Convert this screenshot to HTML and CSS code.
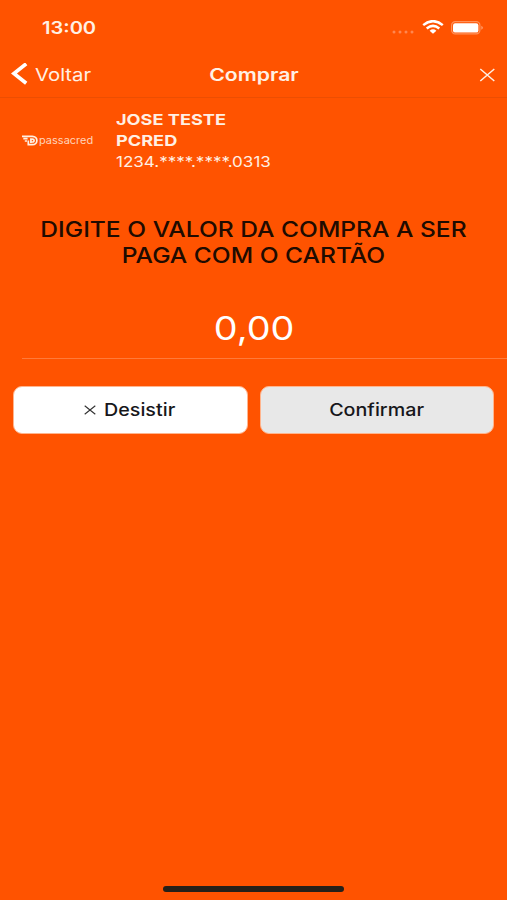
FILE: index.html
```html
<!DOCTYPE html>
<html lang="pt-BR">
<head>
<meta charset="utf-8">
<title>Comprar</title>
<link rel="stylesheet" href="styles.css">
</head>
<body>
<div class="screen">
  <div class="status">
    <span class="wide time">13:00</span>
    <div class="indicators">
      <svg class="signal" width="24" height="4" viewBox="0 0 24 4" fill="#ff8750"><circle cx="3" cy="2" r="1.5"/><circle cx="9" cy="2" r="1.5"/><circle cx="15" cy="2" r="1.5"/><circle cx="21" cy="2" r="1.5"/></svg>
      <svg width="22" height="14" viewBox="0 0 22 14" fill="none" stroke="#fff" stroke-width="2.5"><path d="M1.2 5.1Q11-2.8 20.8 5.1M4.7 8.4Q11 3.4 17.3 8.4"/><path d="M7.6 10.7Q11 8 14.4 10.7L11 13.7Z" fill="#fff" stroke="none"/></svg>
      <svg width="33" height="14" viewBox="0 0 33 14"><rect x=".6" y=".6" width="28.3" height="12.3" rx="3.6" fill="none" stroke="#ff925b" stroke-width="1.2"/><rect x="2" y="2.2" width="25.4" height="9.4" rx="2.2" fill="#fff"/><path d="M30.2 4.8Q34 6.8 30.2 8.8Z" fill="#ff925b"/></svg>
    </div>
  </div>
  <header class="nav">
    <div class="back">
      <svg width="17" height="24" viewBox="0 0 17 24" fill="none" stroke="#fff" stroke-width="3.7"><path d="M15.2 .8L2.9 10.5L15.2 20.2"/></svg>
      <span class="wide">Voltar</span>
    </div>
    <h1><span class="wide">Comprar</span></h1>
    <svg class="close" width="16" height="14" viewBox="0 0 16 14" fill="none" stroke="#fff0e4" stroke-width="1.5"><path d="M1.3 1L15.3 13M15.3 1L1.3 13"/></svg>
  </header>
  <section class="card">
    <div class="logo">
      <svg width="16" height="11" viewBox="0 0 16 11" fill="none" stroke="#fff0e4" stroke-width="1.7"><path d="M0 1.3H10.3C16.4 1.3 16.4 9.7 10.3 9.7H6.3V5.5M1.3 3.7H5.6M2.8 6H5"/><path d="M8.9 7.9V4.1H10.4C12.7 4.1 12.7 7 10.4 7H8.9"/></svg>
      <span class="wide">passacred</span>
    </div>
    <div class="holder">
      <strong class="wide">JOSE TESTE</strong>
      <strong class="wide">PCRED</strong>
      <span class="wide">1234.****.****.0313</span>
    </div>
  </section>
  <h2><span class="wide">DIGITE O VALOR DA COMPRA A SER<br>PAGA COM O CARTÃO</span></h2>
  <div class="amount"><span class="wide">0,00</span></div>
  <div class="actions">
    <button class="cancel"><svg width="12" height="10" viewBox="0 0 12 10" fill="none" stroke="#333" stroke-width="1.1"><path d="M.7.7L11.3 9.3M11.3.7L.7 9.3"/></svg><span class="wide">Desistir</span></button>
    <button class="confirm"><span class="wide">Confirmar</span></button>
  </div>
  <div class="home"></div>
</div>
</body>
</html>
```
FILE: styles.css
```css
* { box-sizing: border-box; }
body { margin: 0; background: #ff5300; font-family: Inter, "Liberation Sans", sans-serif; color: #fff0e4; }
.screen { width: 507px; height: 900px; display: flex; flex-direction: column; overflow: hidden; }
.wide { display: inline-block; white-space: nowrap; transform: scaleX(1.18); transform-origin: left center; }
.status { height: 52px; padding: 3px 23px 0 42px; display: flex; justify-content: space-between; align-items: center; }
.time { font-size: 17px; font-weight: 600; }
.indicators { display: flex; align-items: center; }
.indicators svg:nth-child(2) { margin: -1px 7px 0 7px; }
.signal { margin-top: 8px; }
.nav { height: 46px; border-bottom: 1px solid #ec4e02; display: grid; grid-template-columns: 1fr auto 1fr; align-items: center; padding: 0 12px; font-size: 17.5px; }
.back { display: flex; align-items: center; gap: 7px; }
.back svg { margin-left: -1px; }
.back .wide { transform: scaleX(1.16); }
.nav h1 { margin: 0; padding-left: 2px; font-size: 17.5px; font-weight: 600; }
h1 .wide, h2 .wide, .amount .wide, .confirm .wide { transform-origin: center; }
h1 .wide { transform: scaleX(1.21); }
.close { justify-self: end; }
.card { display: flex; height: 76px; padding: 11px 0 0 22px; }
.logo { width: 93px; height: 62px; display: flex; align-items: center; gap: 1px; font-size: 10px; color: #ffd5bd; }
.logo .wide { transform: scaleX(1.1); }
.holder { display: flex; flex-direction: column; align-items: flex-start; padding-left: .5px; font-size: 15px; line-height: 21.2px; }
.holder strong { transform: scaleX(1.21); }
.holder span { transform: scaleX(1.135); }
h2 { margin: 43px 0 0; text-align: center; font-size: 21.5px; line-height: 25.8px; font-weight: 500; color: #200b00; }
h2 .wide { transform: scaleX(1.143); }
.amount { margin: 37px 0 0 22px; height: 53px; padding-right: 21px; border-bottom: 1px solid #ff7a3a; text-align: center; font-size: 32px; line-height: 45px; color: #fff; }
.actions { display: grid; grid-template-columns: 1fr 1fr; gap: 12px; padding: 27px 13px 0; }
button { height: 48px; border: 1px solid #ffb58e; border-radius: 9px; background: #fff; font: 450 17.3px Inter, sans-serif; color: #17171b; display: flex; align-items: center; justify-content: center; }
button .wide { transform: scaleX(1.14); }
.cancel { gap: 8px; padding-right: 15px; }
.confirm { background: #e8e8e8; }
.home { width: 181px; height: 6px; margin: auto auto 8px; border-radius: 3px; background: #252019; }
```
